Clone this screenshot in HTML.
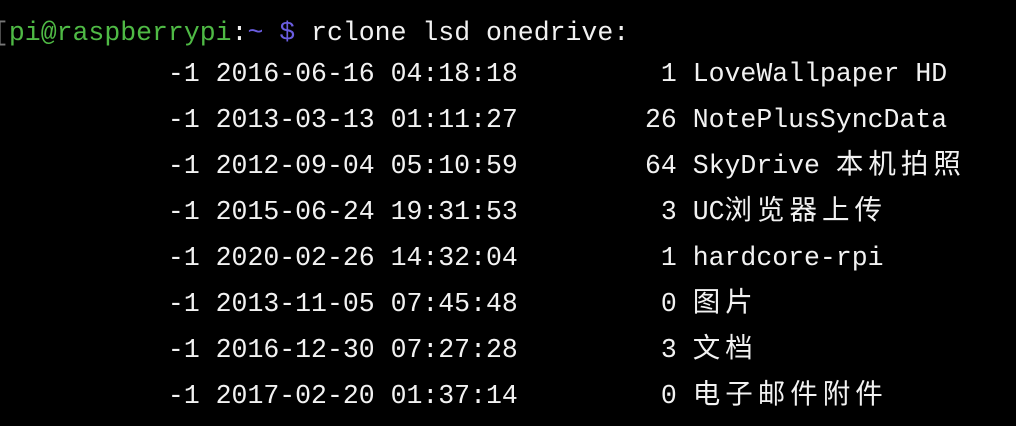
<!DOCTYPE html>
<html><head><meta charset="utf-8"><style>
html,body{margin:0;background:#000;width:1016px;height:426px;overflow:hidden}
#t{position:absolute;left:-7px;top:10px;font-family:"Liberation Mono","Noto Sans CJK SC",monospace;font-size:26.5px;color:#f2f2f2}
#t div{height:46px;line-height:46px;white-space:pre;overflow:hidden}
#t div.s{margin-top:-5px}
.g{color:#4fba45}.p{color:#6a5de0}.c{letter-spacing:5px;font-family:"Noto Sans CJK SC",sans-serif;font-size:27.5px;line-height:0}
.b{color:#777}
</style></head><body><div id="t"><div><span class="b">[</span><span class="g">pi@raspberrypi</span>:<span class="p">~ $</span> rclone lsd onedrive:</div><div class="s">           -1 2016-06-16 04:18:18         1 LoveWallpaper HD</div><div>           -1 2013-03-13 01:11:27        26 NotePlusSyncData</div><div>           -1 2012-09-04 05:10:59        64 SkyDrive <span class="c">本机拍照</span></div><div>           -1 2015-06-24 19:31:53         3 UC<span class="c">浏览器上传</span></div><div>           -1 2020-02-26 14:32:04         1 hardcore-rpi</div><div>           -1 2013-11-05 07:45:48         0 <span class="c">图片</span></div><div>           -1 2016-12-30 07:27:28         3 <span class="c">文档</span></div><div>           -1 2017-02-20 01:37:14         0 <span class="c">电子邮件附件</span></div></div></body></html>
